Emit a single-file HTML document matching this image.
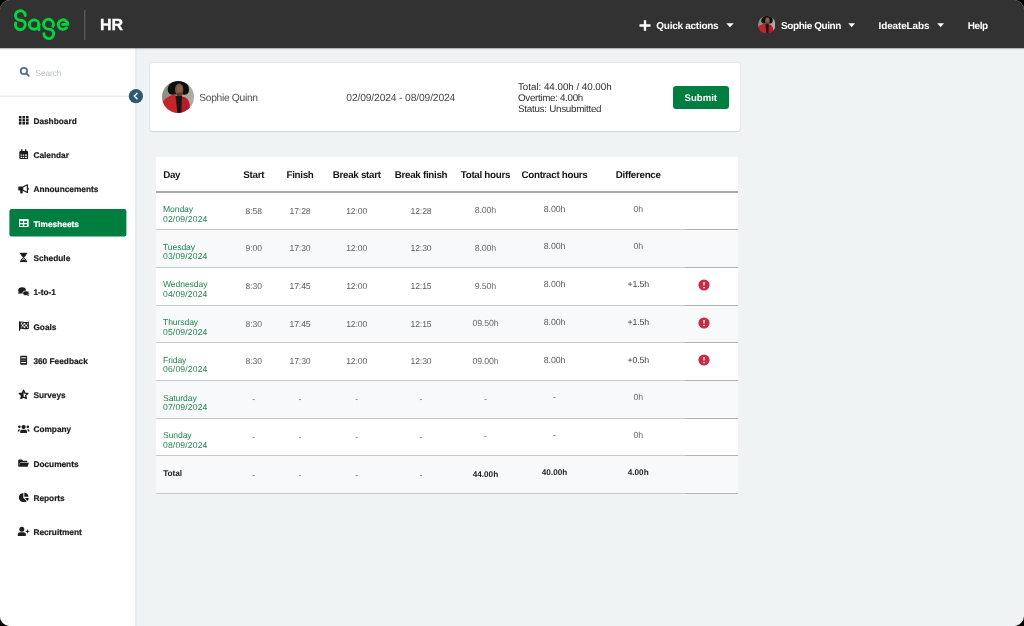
<!DOCTYPE html>
<html><head><meta charset="utf-8">
<style>
html,body{margin:0;padding:0;width:1024px;height:626px;overflow:hidden;background:#000;}
*{box-sizing:border-box;}
#app{will-change:transform;text-rendering:geometricPrecision;position:absolute;left:0;top:0;width:1024px;height:626px;border-radius:10px;overflow:hidden;background:#f0f3f4;font-family:"Liberation Sans",sans-serif;}
.t{position:absolute;white-space:nowrap;}
#hdr{position:absolute;left:0;top:0;width:1024px;height:48px;background:#323232;box-shadow:0 1px 1px rgba(0,0,0,.25);z-index:3;}
#side{position:absolute;left:0;top:48px;width:135px;height:578px;background:#fff;border-right:2px solid #e8ecef;width:137px;}
.nav{color:#fff;font-weight:700;font-size:10px;line-height:10px;}
.si{color:#1d1d1d;font-weight:700;font-size:8.3px;line-height:8.3px;-webkit-text-stroke:0.2px currentColor;}
.c{transform:translateX(-50%);}
.card{position:absolute;background:#fff;border-radius:2px;box-shadow:0 0 0 1px rgba(20,40,60,.05),0 1px 1px rgba(20,40,60,.09);}
</style></head><body>
<div id="app">
  <div id="hdr">
    <!-- Sage logo -->
    <svg style="position:absolute;left:0;top:0" width="90" height="48" viewBox="0 0 90 48">
      <g fill="none" stroke="#00d639" stroke-width="2.9" stroke-linecap="round">
        <path d="M25.2 15.6 A4.9 4.9 0 1 0 16.84 19.06 C18.5 20.7 22.1 19.7 23.76 21.34 A4.9 4.9 0 1 1 15.7 23.1"/>
        <circle cx="34.1" cy="24.6" r="4.7"/>
        <path d="M38.9 24.2 L38.9 29.7"/>
        <path d="M52.9 26.3 A4.9 4.9 0 1 0 45.34 27.96 C47 29.6 50.6 28.6 52.26 30.24 A4.9 4.9 0 1 1 43.9 33.7"/>
        <path d="M62.6 24.4 L67.8 24.4 A4.8 4.8 0 1 0 66.57 27.81"/>
      </g>
      <rect x="84" y="10" width="1.4" height="30" fill="#585858"/>
    </svg>
    <div class="t" style="left:100px;top:18px;color:#fff;font-weight:700;font-size:16px;line-height:16px;-webkit-text-stroke:0.35px #fff">HR</div>
    <!-- plus -->
    <svg style="position:absolute;left:638px;top:19px" width="14" height="13" viewBox="0 0 14 13"><path d="M7 1.2V11.8M1.5 6.5H12.5" stroke="#fff" stroke-width="2.4"/></svg>
    <div class="t nav" style="left:656.3px;top:21.8px;letter-spacing:-0.27px">Quick actions</div>
    <svg style="position:absolute;left:725.5px;top:23px" width="9" height="5" viewBox="0 0 9 5"><path d="M0.3 0.2H7.7L4 4.3Z" fill="#fff"/></svg>
    <!-- avatar small -->
    <svg style="position:absolute;left:757.8px;top:15.8px" width="17.5" height="17.5" viewBox="0 0 32 32">
      <defs><clipPath id="cp2"><circle cx="16" cy="16" r="16"/></clipPath><linearGradient id="cp2g" x1="0" x2="1" y1="0" y2="0"><stop offset="0" stop-color="#8b887e"/><stop offset="1" stop-color="#b3b1a6"/></linearGradient><filter id="cp2f" x="-10%" y="-10%" width="120%" height="120%"><feGaussianBlur stdDeviation="0.45"/></filter></defs>
      <g clip-path="url(#cp2)"><g filter="url(#cp2f)">
        <rect x="-2" y="-2" width="36" height="36" fill="url(#cp2g)"/>
        <path d="M6 10.5 C4.5 4.5 9 0.2 16.5 -0.3 C24 0 28 4 26.8 10.5 C26 13.5 23.5 14 21 13.5 L13 13.5 C10 14 6.8 13.5 6 10.5Z" fill="#111"/>
        <ellipse cx="17.2" cy="8.6" rx="4.2" ry="6.2" fill="#7c5242"/>
        <ellipse cx="17.5" cy="7.5" rx="2.4" ry="3.5" fill="#8e624f"/>
        <rect x="14.8" y="12" width="5" height="5" fill="#5e3d2f"/>
        <path d="M-2 34 L-1 24 C1.5 18.5 6 14.8 11.8 13.8 L14.6 15 L16.2 34Z" fill="#c9202b"/>
        <path d="M19.6 15.2 L23.3 16.4 C26.6 18 27.8 22 27.8 26 L27.8 34 L18.2 34Z" fill="#b71b26"/>
        <path d="M13.6 15 L20 15 L19.3 34 L15.6 34Z" fill="#141414"/>
      </g></g>
    </svg>
    <div class="t nav" style="left:781px;top:21.6px;letter-spacing:-0.42px">Sophie Quinn</div>
    <svg style="position:absolute;left:847.8px;top:23px" width="9" height="5" viewBox="0 0 9 5"><path d="M0.3 0.2H7.0L3.65 4.2Z" fill="#fff"/></svg>
    <div class="t nav" style="left:878.6px;top:21.6px;letter-spacing:-0.15px">IdeateLabs</div>
    <svg style="position:absolute;left:937.2px;top:23px" width="9" height="5" viewBox="0 0 9 5"><path d="M0.3 0.2H7.0L3.65 4.2Z" fill="#fff"/></svg>
    <div class="t nav" style="left:967.7px;top:21.6px;letter-spacing:-0.4px">Help</div>
  </div>

  <div id="side"></div>
  <!-- search -->
  <svg style="position:absolute;left:0;top:0" width="150" height="626" viewBox="0 0 150 626">
    <g fill="none" stroke="#4f7387" stroke-width="1.8" stroke-linecap="round">
      <circle cx="23.9" cy="71" r="3.2"/>
      <path d="M26.4 73.5 L28.8 75.9"/>
    </g>
    <rect x="0" y="95.6" width="129" height="1.2" fill="#e3e8eb"/>
    <!-- highlight -->
    <rect x="9.4" y="209" width="117" height="27.5" rx="2.2" fill="#007e40"/>
    <g fill="#1d1d1d">
      <!-- dashboard grid -->
      <rect x="18.9" y="116" width="2.6" height="2.5" rx=".5"/><rect x="22.45" y="116" width="2.6" height="2.5" rx=".5"/><rect x="26" y="116" width="2.6" height="2.5" rx=".5"/>
      <rect x="18.9" y="119" width="2.6" height="2.5" rx=".5"/><rect x="22.45" y="119" width="2.6" height="2.5" rx=".5"/><rect x="26" y="119" width="2.6" height="2.5" rx=".5"/>
      <rect x="18.9" y="121.9" width="2.6" height="2.5" rx=".5"/><rect x="22.45" y="121.9" width="2.6" height="2.5" rx=".5"/><rect x="26" y="121.9" width="2.6" height="2.5" rx=".5"/>
      <!-- calendar -->
      <rect x="19.3" y="150.9" width="8.8" height="8.2" rx="1"/>
      <rect x="21.2" y="149.2" width="1.3" height="2.2"/><rect x="25" y="149.2" width="1.3" height="2.2"/>
      <!-- megaphone -->
      <rect x="18.3" y="186.4" width="4.9" height="4.1" rx=".6"/>
      <rect x="20.2" y="189.6" width="2.5" height="3.9" rx=".9"/>
      <path d="M22.9 186.9 L27.4 184.8 L27.4 192.6 L22.9 190.3" fill="none" stroke="#1d1d1d" stroke-width="1.15" stroke-linejoin="round"/>
      <rect x="27.6" y="187.8" width="1.1" height="1.9" rx=".4"/>
      <!-- hourglass -->
      <rect x="20" y="252.8" width="7.1" height="1.3"/>
      <rect x="20" y="260.8" width="7.1" height="1.3"/>
      <path d="M20.7 253.8 H26.4 C26.4 255.8 24.6 256.9 23.55 257.6 C22.5 256.9 20.7 255.8 20.7 253.8Z"/>
      <path d="M23.55 257.6 C24.8 258.4 26.2 259.3 26.2 261 M23.55 257.6 C22.3 258.4 20.9 259.3 20.9 261" fill="none" stroke="#1d1d1d" stroke-width="1.1"/>
      <path d="M21.4 261 C21.8 259.9 22.6 259.4 23.55 259.4 C24.5 259.4 25.3 259.9 25.7 261Z"/>
      <!-- comments -->
      <ellipse cx="22.1" cy="290.4" rx="3.9" ry="3.1"/>
      <path d="M18.6 292 L18.3 294 L20.6 293.2Z"/>
      <ellipse cx="25.9" cy="293.2" rx="3.2" ry="2.4" stroke="#fff" stroke-width=".7"/>
      <path d="M28.3 294.2 L29.1 295.8 L27 295.2Z"/>
      <!-- flag -->
      <rect x="19" y="321.2" width="1.3" height="9.5" rx=".5"/>
      <path d="M20.3 322.2 C22.5 321.4 24.4 323.3 28.3 322.3 V328.4 C24.4 329.4 22.5 327.5 20.3 328.3Z" fill="none" stroke="#1d1d1d" stroke-width="1.1"/>
      <rect x="21.8" y="322.8" width="1.8" height="1.7"/><rect x="25.2" y="323" width="1.8" height="1.7"/>
      <rect x="20.3" y="324.6" width="1.6" height="1.8"/><rect x="23.5" y="324.6" width="1.8" height="1.8"/><rect x="27" y="324.6" width="1.3" height="1.8"/>
      <rect x="21.8" y="326.4" width="1.8" height="1.7"/><rect x="25.2" y="326.4" width="1.8" height="1.7"/>
      <!-- doc -->
      <rect x="20.2" y="355.8" width="6.9" height="8.9" rx=".9"/>
      <!-- star -->
      <path d="M23.6 390.4 L24.85 393.1 L27.9 393.5 L25.65 395.6 L26.3 398.5 L23.6 397.1 L20.9 398.5 L21.55 395.6 L19.3 393.5 L22.35 393.1Z" fill="none" stroke="#1d1d1d" stroke-width="1.35" stroke-linejoin="round"/>
      <path d="M23.6 390.4 L22.35 393.1 L19.3 393.5 L21.55 395.6 L20.9 398.5 L23.6 397.1Z"/>
      <!-- company -->
      <circle cx="23.6" cy="427" r="2.1"/>
      <path d="M20.3 432.9 V431.2 C20.3 430.2 21 429.7 22 429.7 H25.2 C26.2 429.7 26.9 430.2 26.9 431.2 V432.9Z"/>
      <circle cx="19.4" cy="426.8" r="1.3"/><circle cx="27.8" cy="426.8" r="1.3"/>
      <path d="M17.8 431.4 C17.8 429.8 18.5 429.2 19.6 429.2 L20 429.2 C19.5 429.8 19.4 430.5 19.4 431.4Z"/>
      <path d="M29.5 431.4 C29.5 429.8 28.8 429.2 27.7 429.2 L27.3 429.2 C27.8 429.8 27.9 430.5 27.9 431.4Z"/>
      <!-- folder -->
      <path d="M18.2 466.7 V460.3 C18.2 459.8 18.6 459.4 19.1 459.4 H21.9 L23 460.7 H26.6 C27 460.7 27.3 461 27.3 461.4 V462.2 H21 C20.4 462.2 20 462.5 19.8 463 L18.6 466.7Z"/>
      <path d="M20.2 462.7 H28.9 L27.6 466.7 H18.5Z"/>
      <!-- pie -->
      <path d="M23.3 492.9 V497.8 L26.8 501.3 C25.9 501.9 24.8 502.1 23.6 502.1 C21 502.1 18.8 499.9 18.8 497.3 C18.8 494.9 20.8 493 23.3 492.9Z"/>
      <path d="M24.3 492.6 C26.6 492.7 28.4 494.5 28.5 496.8 H24.3Z"/>
      <path d="M24.8 497.9 H28.7 C28.7 499.2 28.2 500.3 27.4 501Z"/>
      <!-- user plus -->
      <circle cx="21.8" cy="529.3" r="2.5"/>
      <path d="M17.8 536.1 V534.3 C17.8 533 18.8 532.2 20.2 532.2 H23.4 C24.8 532.2 25.8 533 25.8 534.3 V536.1Z"/>
      <path d="M27.45 529.1 L28.1 530.8 L29.8 531.45 L28.1 532.1 L27.45 533.8 L26.8 532.1 L25.1 531.45 L26.8 530.8Z"/>
    </g>
    <!-- calendar white cells -->
    <g fill="#fff">
      <rect x="20.6" y="154.5" width="1.3" height="1.2"/><rect x="22.7" y="154.5" width="1.3" height="1.2"/><rect x="24.8" y="154.5" width="2.2" height="1.2"/>
      <rect x="20.6" y="156.8" width="1.3" height="1.2"/><rect x="22.7" y="156.8" width="1.3" height="1.2"/><rect x="24.8" y="156.8" width="2.2" height="1.2"/>
      <!-- doc lines -->
      <rect x="21.2" y="357.3" width="4.9" height="1"/>
      <rect x="21.2" y="359.8" width="4.9" height=".8" fill="#888"/>
      <rect x="21.2" y="362" width="4.9" height="1"/>
      <!-- timesheets icon -->
      <rect x="19" y="219.1" width="9.7" height="8" rx=".9"/>
    </g>
    <g fill="#007e40">
      <rect x="20.1" y="221.1" width="2.8" height="1.9" rx=".4"/><rect x="24.1" y="221.1" width="3" height="1.9" rx=".4"/>
      <rect x="20.1" y="224.2" width="2.8" height="1.9" rx=".4"/><rect x="24.1" y="224.2" width="3" height="1.9" rx=".4"/>
    </g>
    <!-- collapse button -->
    <circle cx="135.9" cy="96.2" r="7.1" fill="#2d5a72"/>
    <path d="M136.9 93.4 L134.3 96.1 L136.9 98.8" fill="none" stroke="#fff" stroke-width="1.5" stroke-linecap="round" stroke-linejoin="round"/>
  </svg>
  <div class="t" style="left:35.4px;top:69.40px;font-size:8.4px;line-height:8.4px;color:#b3c1c9;letter-spacing:-0.1px">Search</div>
    <div class="t si" style="left:33.4px;top:116.74px;color:#1d1d1d">Dashboard</div>
    <div class="t si" style="left:33.4px;top:151.04px;color:#1d1d1d">Calendar</div>
    <div class="t si" style="left:33.4px;top:185.34px;color:#1d1d1d">Announcements</div>
    <div class="t si" style="left:33.4px;top:219.65px;color:#fff">Timesheets</div>
    <div class="t si" style="left:33.4px;top:253.95px;color:#1d1d1d">Schedule</div>
    <div class="t si" style="left:33.4px;top:288.24px;color:#1d1d1d">1-to-1</div>
    <div class="t si" style="left:33.4px;top:322.54px;color:#1d1d1d">Goals</div>
    <div class="t si" style="left:33.4px;top:356.84px;color:#1d1d1d">360 Feedback</div>
    <div class="t si" style="left:33.4px;top:391.14px;color:#1d1d1d">Surveys</div>
    <div class="t si" style="left:33.4px;top:425.45px;color:#1d1d1d">Company</div>
    <div class="t si" style="left:33.4px;top:459.74px;color:#1d1d1d">Documents</div>
    <div class="t si" style="left:33.4px;top:494.04px;color:#1d1d1d">Reports</div>
    <div class="t si" style="left:33.4px;top:528.35px;color:#1d1d1d">Recruitment</div>

  <!-- summary card -->
  <div class="card" style="left:150px;top:63px;width:590px;height:68px;"></div>
  <svg style="position:absolute;left:161.6px;top:81.4px" width="32" height="32" viewBox="0 0 32 32">
    <defs><clipPath id="cp1"><circle cx="16" cy="16" r="16"/></clipPath><linearGradient id="cp1g" x1="0" x2="1" y1="0" y2="0"><stop offset="0" stop-color="#8b887e"/><stop offset="1" stop-color="#b3b1a6"/></linearGradient><filter id="cp1f" x="-10%" y="-10%" width="120%" height="120%"><feGaussianBlur stdDeviation="0.45"/></filter></defs>
      <g clip-path="url(#cp1)"><g filter="url(#cp1f)">
        <rect x="-2" y="-2" width="36" height="36" fill="url(#cp1g)"/>
        <path d="M6 10.5 C4.5 4.5 9 0.2 16.5 -0.3 C24 0 28 4 26.8 10.5 C26 13.5 23.5 14 21 13.5 L13 13.5 C10 14 6.8 13.5 6 10.5Z" fill="#111"/>
        <ellipse cx="17.2" cy="8.6" rx="4.2" ry="6.2" fill="#7c5242"/>
        <ellipse cx="17.5" cy="7.5" rx="2.4" ry="3.5" fill="#8e624f"/>
        <rect x="14.8" y="12" width="5" height="5" fill="#5e3d2f"/>
        <path d="M-2 34 L-1 24 C1.5 18.5 6 14.8 11.8 13.8 L14.6 15 L16.2 34Z" fill="#c9202b"/>
        <path d="M19.6 15.2 L23.3 16.4 C26.6 18 27.8 22 27.8 26 L27.8 34 L18.2 34Z" fill="#b71b26"/>
        <path d="M13.6 15 L20 15 L19.3 34 L15.6 34Z" fill="#141414"/>
      </g></g>
  </svg>
  <div class="t" style="left:199.2px;top:93.70px;font-size:10.3px;line-height:10.3px;color:#505050;letter-spacing:-0.32px">Sophie Quinn</div>
  <div class="t" style="left:346.3px;top:94.00px;font-size:10.3px;line-height:10.3px;color:#4a4a4a;letter-spacing:-0.145px">02/09/2024 - 08/09/2024</div>
  <div class="t" style="left:518px;top:82.90px;font-size:9.8px;line-height:9.8px;color:#2f2f2f;letter-spacing:-0.03px">Total: 44.00h / 40.00h</div>
  <div class="t" style="left:518px;top:93.70px;font-size:9.8px;line-height:9.8px;color:#2f2f2f;letter-spacing:-0.32px">Overtime: 4.00h</div>
  <div class="t" style="left:518px;top:105.00px;font-size:9.8px;line-height:9.8px;color:#2f2f2f;letter-spacing:-0.26px">Status: Unsubmitted</div>
  <div style="position:absolute;left:673px;top:86px;width:56px;height:23px;border-radius:3px;background:#007e40"></div>
  <div class="t c" style="left:700.8px;top:93.54px;font-size:9.6px;line-height:9.6px;color:#fff;font-weight:700">Submit</div>

  <!-- table -->
  <!--TABLE-->
<div style="position:absolute;left:156px;top:156.5px;width:582px;height:337px;background:#fff"></div>
<div style="position:absolute;left:156px;top:191px;width:582px;height:2px;background:#a9a9a9"></div>
<div style="position:absolute;left:156px;top:193.0px;width:582px;height:36.2px;background:#fff"></div>
<div style="position:absolute;left:156px;top:229.2px;width:529px;height:1px;background:#c9c9c9"></div>
<div style="position:absolute;left:685px;top:229.2px;width:53px;height:1px;background:#b3b3b3"></div>
<div style="position:absolute;left:156px;top:230.2px;width:582px;height:36.7px;background:#f8f9fa"></div>
<div style="position:absolute;left:156px;top:266.9px;width:529px;height:1px;background:#c9c9c9"></div>
<div style="position:absolute;left:685px;top:266.9px;width:53px;height:1px;background:#b3b3b3"></div>
<div style="position:absolute;left:156px;top:267.9px;width:582px;height:36.7px;background:#fff"></div>
<div style="position:absolute;left:156px;top:304.6px;width:529px;height:1px;background:#c9c9c9"></div>
<div style="position:absolute;left:685px;top:304.6px;width:53px;height:1px;background:#b3b3b3"></div>
<div style="position:absolute;left:156px;top:305.6px;width:582px;height:36.7px;background:#f8f9fa"></div>
<div style="position:absolute;left:156px;top:342.3px;width:529px;height:1px;background:#c9c9c9"></div>
<div style="position:absolute;left:685px;top:342.3px;width:53px;height:1px;background:#b3b3b3"></div>
<div style="position:absolute;left:156px;top:343.3px;width:582px;height:36.7px;background:#fff"></div>
<div style="position:absolute;left:156px;top:380.0px;width:529px;height:1px;background:#c9c9c9"></div>
<div style="position:absolute;left:685px;top:380.0px;width:53px;height:1px;background:#b3b3b3"></div>
<div style="position:absolute;left:156px;top:381.0px;width:582px;height:36.7px;background:#f8f9fa"></div>
<div style="position:absolute;left:156px;top:417.7px;width:529px;height:1px;background:#c9c9c9"></div>
<div style="position:absolute;left:685px;top:417.7px;width:53px;height:1px;background:#b3b3b3"></div>
<div style="position:absolute;left:156px;top:418.7px;width:582px;height:36.7px;background:#fff"></div>
<div style="position:absolute;left:156px;top:455.4px;width:529px;height:1px;background:#c9c9c9"></div>
<div style="position:absolute;left:685px;top:455.4px;width:53px;height:1px;background:#b3b3b3"></div>
<div style="position:absolute;left:156px;top:456.4px;width:582px;height:36.7px;background:#f8f9fa"></div>
<div style="position:absolute;left:156px;top:493.1px;width:529px;height:1px;background:#c9c9c9"></div>
<div style="position:absolute;left:685px;top:493.1px;width:53px;height:1px;background:#b3b3b3"></div>
<div class="t" style="left:163.20px;top:170.57px;font-size:9.8px;line-height:9.8px;color:#161616;font-weight:700;letter-spacing:-0.3px">Day</div>
<div class="t c" style="left:253.75px;top:170.57px;font-size:9.8px;line-height:9.8px;color:#161616;font-weight:700;letter-spacing:-0.3px">Start</div>
<div class="t c" style="left:300.00px;top:170.57px;font-size:9.8px;line-height:9.8px;color:#161616;font-weight:700;letter-spacing:-0.3px">Finish</div>
<div class="t c" style="left:356.70px;top:170.57px;font-size:9.8px;line-height:9.8px;color:#161616;font-weight:700;letter-spacing:-0.3px">Break start</div>
<div class="t c" style="left:421.00px;top:170.57px;font-size:9.8px;line-height:9.8px;color:#161616;font-weight:700;letter-spacing:-0.3px">Break finish</div>
<div class="t c" style="left:485.40px;top:170.57px;font-size:9.8px;line-height:9.8px;color:#161616;font-weight:700;letter-spacing:-0.3px">Total hours</div>
<div class="t c" style="left:554.50px;top:170.57px;font-size:9.8px;line-height:9.8px;color:#161616;font-weight:700;letter-spacing:-0.3px">Contract hours</div>
<div class="t c" style="left:638.20px;top:170.57px;font-size:9.8px;line-height:9.8px;color:#161616;font-weight:700;letter-spacing:-0.3px">Difference</div>
<div class="t" style="left:163.00px;top:205.09px;font-size:8.6px;line-height:8.6px;color:#238650;font-weight:400;letter-spacing:-0.1px">Monday</div>
<div class="t" style="left:163.00px;top:214.59px;font-size:8.6px;line-height:8.6px;color:#238650;font-weight:400;letter-spacing:0.15px">02/09/2024</div>
<div class="t c" style="left:253.75px;top:206.69px;font-size:8.6px;line-height:8.6px;color:#606060;font-weight:400;letter-spacing:-0.1px">8:58</div>
<div class="t c" style="left:300.00px;top:206.69px;font-size:8.6px;line-height:8.6px;color:#606060;font-weight:400;letter-spacing:-0.1px">17:28</div>
<div class="t c" style="left:356.70px;top:206.69px;font-size:8.6px;line-height:8.6px;color:#606060;font-weight:400;letter-spacing:-0.1px">12:00</div>
<div class="t c" style="left:421.00px;top:206.69px;font-size:8.6px;line-height:8.6px;color:#606060;font-weight:400;letter-spacing:-0.1px">12:28</div>
<div class="t c" style="left:485.40px;top:206.12px;font-size:8.8px;line-height:8.8px;color:#6a6a6a;font-weight:400;letter-spacing:-0.15px">8.00h</div>
<div class="t c" style="left:554.50px;top:204.72px;font-size:8.8px;line-height:8.8px;color:#5e5e5e;font-weight:400;letter-spacing:-0.15px">8.00h</div>
<div class="t c" style="left:638.20px;top:204.72px;font-size:8.8px;line-height:8.8px;color:#6a6a6a;font-weight:400;letter-spacing:-0.15px">0h</div>
<div class="t" style="left:163.00px;top:242.79px;font-size:8.6px;line-height:8.6px;color:#238650;font-weight:400;letter-spacing:-0.1px">Tuesday</div>
<div class="t" style="left:163.00px;top:252.29px;font-size:8.6px;line-height:8.6px;color:#238650;font-weight:400;letter-spacing:0.15px">03/09/2024</div>
<div class="t c" style="left:253.75px;top:244.39px;font-size:8.6px;line-height:8.6px;color:#606060;font-weight:400;letter-spacing:-0.1px">9:00</div>
<div class="t c" style="left:300.00px;top:244.39px;font-size:8.6px;line-height:8.6px;color:#606060;font-weight:400;letter-spacing:-0.1px">17:30</div>
<div class="t c" style="left:356.70px;top:244.39px;font-size:8.6px;line-height:8.6px;color:#606060;font-weight:400;letter-spacing:-0.1px">12:00</div>
<div class="t c" style="left:421.00px;top:244.39px;font-size:8.6px;line-height:8.6px;color:#606060;font-weight:400;letter-spacing:-0.1px">12:30</div>
<div class="t c" style="left:485.40px;top:243.82px;font-size:8.8px;line-height:8.8px;color:#6a6a6a;font-weight:400;letter-spacing:-0.15px">8.00h</div>
<div class="t c" style="left:554.50px;top:242.42px;font-size:8.8px;line-height:8.8px;color:#5e5e5e;font-weight:400;letter-spacing:-0.15px">8.00h</div>
<div class="t c" style="left:638.20px;top:242.42px;font-size:8.8px;line-height:8.8px;color:#6a6a6a;font-weight:400;letter-spacing:-0.15px">0h</div>
<div class="t" style="left:163.00px;top:280.49px;font-size:8.6px;line-height:8.6px;color:#238650;font-weight:400;letter-spacing:-0.1px">Wednesday</div>
<div class="t" style="left:163.00px;top:289.99px;font-size:8.6px;line-height:8.6px;color:#238650;font-weight:400;letter-spacing:0.15px">04/09/2024</div>
<div class="t c" style="left:253.75px;top:282.09px;font-size:8.6px;line-height:8.6px;color:#606060;font-weight:400;letter-spacing:-0.1px">8:30</div>
<div class="t c" style="left:300.00px;top:282.09px;font-size:8.6px;line-height:8.6px;color:#606060;font-weight:400;letter-spacing:-0.1px">17:45</div>
<div class="t c" style="left:356.70px;top:282.09px;font-size:8.6px;line-height:8.6px;color:#606060;font-weight:400;letter-spacing:-0.1px">12:00</div>
<div class="t c" style="left:421.00px;top:282.09px;font-size:8.6px;line-height:8.6px;color:#606060;font-weight:400;letter-spacing:-0.1px">12:15</div>
<div class="t c" style="left:485.40px;top:281.52px;font-size:8.8px;line-height:8.8px;color:#6a6a6a;font-weight:400;letter-spacing:-0.15px">9.50h</div>
<div class="t c" style="left:554.50px;top:280.12px;font-size:8.8px;line-height:8.8px;color:#5e5e5e;font-weight:400;letter-spacing:-0.15px">8.00h</div>
<div class="t c" style="left:638.20px;top:280.12px;font-size:8.8px;line-height:8.8px;color:#474747;font-weight:400;letter-spacing:-0.15px">+1.5h</div>
<svg style="position:absolute;left:698.2px;top:279.0px" width="12" height="12" viewBox="0 0 12 12"><circle cx="6" cy="6" r="5.6" fill="#cc2943"/><path d="M5.1 3.5 Q5.1 3 6 3 Q6.9 3 6.9 3.5 L6.45 6.4 L5.55 6.4Z" fill="#fff"/><circle cx="6" cy="8.5" r=".85" fill="#fff"/></svg>
<div class="t" style="left:163.00px;top:318.19px;font-size:8.6px;line-height:8.6px;color:#238650;font-weight:400;letter-spacing:-0.1px">Thursday</div>
<div class="t" style="left:163.00px;top:327.69px;font-size:8.6px;line-height:8.6px;color:#238650;font-weight:400;letter-spacing:0.15px">05/09/2024</div>
<div class="t c" style="left:253.75px;top:319.79px;font-size:8.6px;line-height:8.6px;color:#606060;font-weight:400;letter-spacing:-0.1px">8:30</div>
<div class="t c" style="left:300.00px;top:319.79px;font-size:8.6px;line-height:8.6px;color:#606060;font-weight:400;letter-spacing:-0.1px">17:45</div>
<div class="t c" style="left:356.70px;top:319.79px;font-size:8.6px;line-height:8.6px;color:#606060;font-weight:400;letter-spacing:-0.1px">12:00</div>
<div class="t c" style="left:421.00px;top:319.79px;font-size:8.6px;line-height:8.6px;color:#606060;font-weight:400;letter-spacing:-0.1px">12:15</div>
<div class="t c" style="left:485.40px;top:319.22px;font-size:8.8px;line-height:8.8px;color:#6a6a6a;font-weight:400;letter-spacing:-0.15px">09.50h</div>
<div class="t c" style="left:554.50px;top:317.82px;font-size:8.8px;line-height:8.8px;color:#5e5e5e;font-weight:400;letter-spacing:-0.15px">8.00h</div>
<div class="t c" style="left:638.20px;top:317.82px;font-size:8.8px;line-height:8.8px;color:#474747;font-weight:400;letter-spacing:-0.15px">+1.5h</div>
<svg style="position:absolute;left:698.2px;top:316.7px" width="12" height="12" viewBox="0 0 12 12"><circle cx="6" cy="6" r="5.6" fill="#cc2943"/><path d="M5.1 3.5 Q5.1 3 6 3 Q6.9 3 6.9 3.5 L6.45 6.4 L5.55 6.4Z" fill="#fff"/><circle cx="6" cy="8.5" r=".85" fill="#fff"/></svg>
<div class="t" style="left:163.00px;top:355.89px;font-size:8.6px;line-height:8.6px;color:#238650;font-weight:400;letter-spacing:-0.1px">Friday</div>
<div class="t" style="left:163.00px;top:365.39px;font-size:8.6px;line-height:8.6px;color:#238650;font-weight:400;letter-spacing:0.15px">06/09/2024</div>
<div class="t c" style="left:253.75px;top:357.49px;font-size:8.6px;line-height:8.6px;color:#606060;font-weight:400;letter-spacing:-0.1px">8:30</div>
<div class="t c" style="left:300.00px;top:357.49px;font-size:8.6px;line-height:8.6px;color:#606060;font-weight:400;letter-spacing:-0.1px">17:30</div>
<div class="t c" style="left:356.70px;top:357.49px;font-size:8.6px;line-height:8.6px;color:#606060;font-weight:400;letter-spacing:-0.1px">12:00</div>
<div class="t c" style="left:421.00px;top:357.49px;font-size:8.6px;line-height:8.6px;color:#606060;font-weight:400;letter-spacing:-0.1px">12:30</div>
<div class="t c" style="left:485.40px;top:356.92px;font-size:8.8px;line-height:8.8px;color:#6a6a6a;font-weight:400;letter-spacing:-0.15px">09.00h</div>
<div class="t c" style="left:554.50px;top:355.52px;font-size:8.8px;line-height:8.8px;color:#5e5e5e;font-weight:400;letter-spacing:-0.15px">8.00h</div>
<div class="t c" style="left:638.20px;top:355.52px;font-size:8.8px;line-height:8.8px;color:#474747;font-weight:400;letter-spacing:-0.15px">+0.5h</div>
<svg style="position:absolute;left:698.2px;top:354.4px" width="12" height="12" viewBox="0 0 12 12"><circle cx="6" cy="6" r="5.6" fill="#cc2943"/><path d="M5.1 3.5 Q5.1 3 6 3 Q6.9 3 6.9 3.5 L6.45 6.4 L5.55 6.4Z" fill="#fff"/><circle cx="6" cy="8.5" r=".85" fill="#fff"/></svg>
<div class="t" style="left:163.00px;top:393.59px;font-size:8.6px;line-height:8.6px;color:#238650;font-weight:400;letter-spacing:-0.1px">Saturday</div>
<div class="t" style="left:163.00px;top:403.09px;font-size:8.6px;line-height:8.6px;color:#238650;font-weight:400;letter-spacing:0.15px">07/09/2024</div>
<div class="t c" style="left:253.75px;top:395.19px;font-size:8.6px;line-height:8.6px;color:#606060;font-weight:400;letter-spacing:-0.1px">-</div>
<div class="t c" style="left:300.00px;top:395.19px;font-size:8.6px;line-height:8.6px;color:#606060;font-weight:400;letter-spacing:-0.1px">-</div>
<div class="t c" style="left:356.70px;top:395.19px;font-size:8.6px;line-height:8.6px;color:#606060;font-weight:400;letter-spacing:-0.1px">-</div>
<div class="t c" style="left:421.00px;top:395.19px;font-size:8.6px;line-height:8.6px;color:#606060;font-weight:400;letter-spacing:-0.1px">-</div>
<div class="t c" style="left:485.40px;top:394.62px;font-size:8.8px;line-height:8.8px;color:#6a6a6a;font-weight:400;letter-spacing:-0.15px">-</div>
<div class="t c" style="left:554.50px;top:393.22px;font-size:8.8px;line-height:8.8px;color:#5e5e5e;font-weight:400;letter-spacing:-0.15px">-</div>
<div class="t c" style="left:638.20px;top:393.22px;font-size:8.8px;line-height:8.8px;color:#6a6a6a;font-weight:400;letter-spacing:-0.15px">0h</div>
<div class="t" style="left:163.00px;top:431.29px;font-size:8.6px;line-height:8.6px;color:#238650;font-weight:400;letter-spacing:-0.1px">Sunday</div>
<div class="t" style="left:163.00px;top:440.79px;font-size:8.6px;line-height:8.6px;color:#238650;font-weight:400;letter-spacing:0.15px">08/09/2024</div>
<div class="t c" style="left:253.75px;top:432.89px;font-size:8.6px;line-height:8.6px;color:#606060;font-weight:400;letter-spacing:-0.1px">-</div>
<div class="t c" style="left:300.00px;top:432.89px;font-size:8.6px;line-height:8.6px;color:#606060;font-weight:400;letter-spacing:-0.1px">-</div>
<div class="t c" style="left:356.70px;top:432.89px;font-size:8.6px;line-height:8.6px;color:#606060;font-weight:400;letter-spacing:-0.1px">-</div>
<div class="t c" style="left:421.00px;top:432.89px;font-size:8.6px;line-height:8.6px;color:#606060;font-weight:400;letter-spacing:-0.1px">-</div>
<div class="t c" style="left:485.40px;top:432.32px;font-size:8.8px;line-height:8.8px;color:#6a6a6a;font-weight:400;letter-spacing:-0.15px">-</div>
<div class="t c" style="left:554.50px;top:430.92px;font-size:8.8px;line-height:8.8px;color:#5e5e5e;font-weight:400;letter-spacing:-0.15px">-</div>
<div class="t c" style="left:638.20px;top:430.92px;font-size:8.8px;line-height:8.8px;color:#6a6a6a;font-weight:400;letter-spacing:-0.15px">0h</div>
<div class="t" style="left:163.20px;top:468.55px;font-size:8.3px;line-height:8.3px;color:#1f1f1f;font-weight:700;letter-spacing:-0.1px">Total</div>
<div class="t c" style="left:253.75px;top:470.59px;font-size:8.6px;line-height:8.6px;color:#606060;font-weight:400;letter-spacing:0px">-</div>
<div class="t c" style="left:300.00px;top:470.59px;font-size:8.6px;line-height:8.6px;color:#606060;font-weight:400;letter-spacing:0px">-</div>
<div class="t c" style="left:356.70px;top:470.59px;font-size:8.6px;line-height:8.6px;color:#606060;font-weight:400;letter-spacing:0px">-</div>
<div class="t c" style="left:421.00px;top:470.59px;font-size:8.6px;line-height:8.6px;color:#606060;font-weight:400;letter-spacing:0px">-</div>
<div class="t c" style="left:485.40px;top:470.63px;font-size:8.2px;line-height:8.2px;color:#1f1f1f;font-weight:700;letter-spacing:0px">44.00h</div>
<div class="t c" style="left:554.50px;top:468.93px;font-size:8.2px;line-height:8.2px;color:#1f1f1f;font-weight:700;letter-spacing:0px">40.00h</div>
<div class="t c" style="left:638.20px;top:468.93px;font-size:8.2px;line-height:8.2px;color:#1f1f1f;font-weight:700;letter-spacing:0px">4.00h</div>
<!--/TABLE-->
</div>
</body></html>
